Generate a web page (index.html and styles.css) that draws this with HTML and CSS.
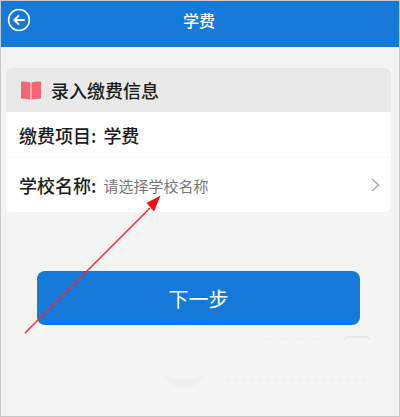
FILE: index.html
```html
<!DOCTYPE html>
<html lang="zh-CN">
<head>
    <meta charset="UTF-8">
    <meta name="viewport" content="width=device-width, initial-scale=1.0">
    <title>学费</title>
    <link rel="stylesheet" href="styles.css">
</head>
<body>

    <!-- 顶部导航 -->
    <header class="navbar">
        <a class="back" href="#" aria-label="返回">
            <svg width="24" height="24" viewBox="0 0 24 24" fill="none" stroke="#fff" stroke-linecap="round" stroke-linejoin="round">
                <circle cx="12" cy="12" r="10.4" stroke-width="1.5"/>
                <path d="M17 12H7.5M11.5 7.8L7.3 12l4.2 4.2" stroke-width="1.9"/>
            </svg>
        </a>
        <h1 class="title">学费</h1>
    </header>

    <main class="content">
        <form class="form">
            <!-- 缴费信息 -->
            <section class="card">
                <h2 class="card-head">
                    <svg class="book" width="20" height="19" viewBox="0 0 20 19" fill="#fa6470">
                        <path d="M0 1.4Q0 .4 1 .4 6 .2 9.4 1.6V18.8Q6 17.4 1 17.8 0 17.8 0 16.8Z"/>
                        <path d="M20 1.4Q20 .4 19 .4 14 .2 10.6 1.6V18.8Q14 17.4 19 17.8 20 17.8 20 16.8Z"/>
                    </svg>
                    录入缴费信息
                </h2>
                <div class="row">
                    <span class="label">缴费项目:</span>
                    <span class="value">学费</span>
                </div>
                <div class="row row-school">
                    <label class="label" for="school">学校名称:</label>
                    <select class="school" id="school">
                        <option>请选择学校名称</option>
                    </select>
                    <svg class="arrow" width="9" height="14" viewBox="0 0 9 14" fill="none" stroke="#a8a8a8" stroke-width="1.5">
                        <path d="M1 1l6.5 6L1 13"/>
                    </svg>
                </div>
            </section>

            <button class="next" type="button">下一步</button>
        </form>
    </main>

    <!-- 红色指示箭头 -->
    <svg class="pointer" width="140" height="142" viewBox="0 0 140 142">
        <path d="M3 139L128 14" stroke="#f52a30" stroke-width="1.5"/>
        <path d="M138.500 1.500L124.500 9 132 17.500Z" fill="#fb0d12"/>
    </svg>

    <!-- 底部浅色水印 -->
    <svg class="stamp" width="210" height="60" viewBox="0 0 210 60" fill="none" stroke="#f1f1f1">
        <path d="M2 38Q22 48 44 38Q37 52 23 52 9 52 2 38Z" fill="#f0f0f0" stroke="none"/>
        <path d="M64 44H206" stroke-width="4" stroke-dasharray="5 3"/>
        <path d="M74 3H168" stroke-width="3" stroke-dasharray="9 6"/>
        <path d="M184 4Q184 1 188 1H204Q208 1 208 4" stroke="#e9e9e9" stroke-width="2"/>
    </svg>

</body>
</html>
```
FILE: styles.css
```css
* {
    box-sizing: border-box;
}

body {
    margin: 0;
    min-height: 100vh;
    background: #f4f4f4;
    border: 1px solid #c8c8c8;
    color: #1c1c1c;
    font-family: "Noto Sans CJK SC", sans-serif;
    position: relative;
}

/* 顶部导航 */
.navbar {
    display: grid;
    grid-template-columns: 24px 1fr 24px;
    align-items: center;
    height: 46px;
    padding: 0 8px 8px 6px;
    background: #137ad8;
}

.back {
    display: flex;
}

.title {
    margin: 0;
    color: #fff;
    font-size: 16px;
    font-weight: 500;
    line-height: 24px;
    text-align: center;
}

.content {
    padding: 21px 8px 0 5px;
}

/* 缴费信息卡片 */
.card {
    overflow: hidden;
    background: #fff;
    border-radius: 6px;
}

.card-head {
    display: flex;
    align-items: center;
    gap: 10px;
    height: 44px;
    margin: 0;
    padding: 0 15px;
    background: #e9e9e9;
    font-size: 18px;
    font-weight: 500;
}

.row {
    display: flex;
    align-items: center;
    gap: 7px;
    height: 45px;
    padding: 0 11px 0 13px;
    font-size: 18px;
    font-weight: 500;
}

.row-school {
    height: 55px;
    border-top: 1px solid #fafafa;
}

.label {
    flex: none;
}

.school {
    flex: 1;
    min-width: 0;
    padding: 0;
    border: 0;
    appearance: none;
    background: transparent;
    color: #777;
    font-family: inherit;
    font-size: 15px;
}

/* 下一步按钮 */
.next {
    display: block;
    width: calc(100% - 62px);
    height: 54px;
    margin: 59px auto 0;
    border: 0;
    border-radius: 8px;
    background: #137ad8;
    color: #fff;
    font-family: inherit;
    font-size: 20px;
}

/* 覆盖在页面上的标记 */
.pointer {
    position: absolute;
    top: 193px;
    left: 21px;
    pointer-events: none;
}

.stamp {
    position: absolute;
    right: 28px;
    bottom: 20px;
    pointer-events: none;
}
```
